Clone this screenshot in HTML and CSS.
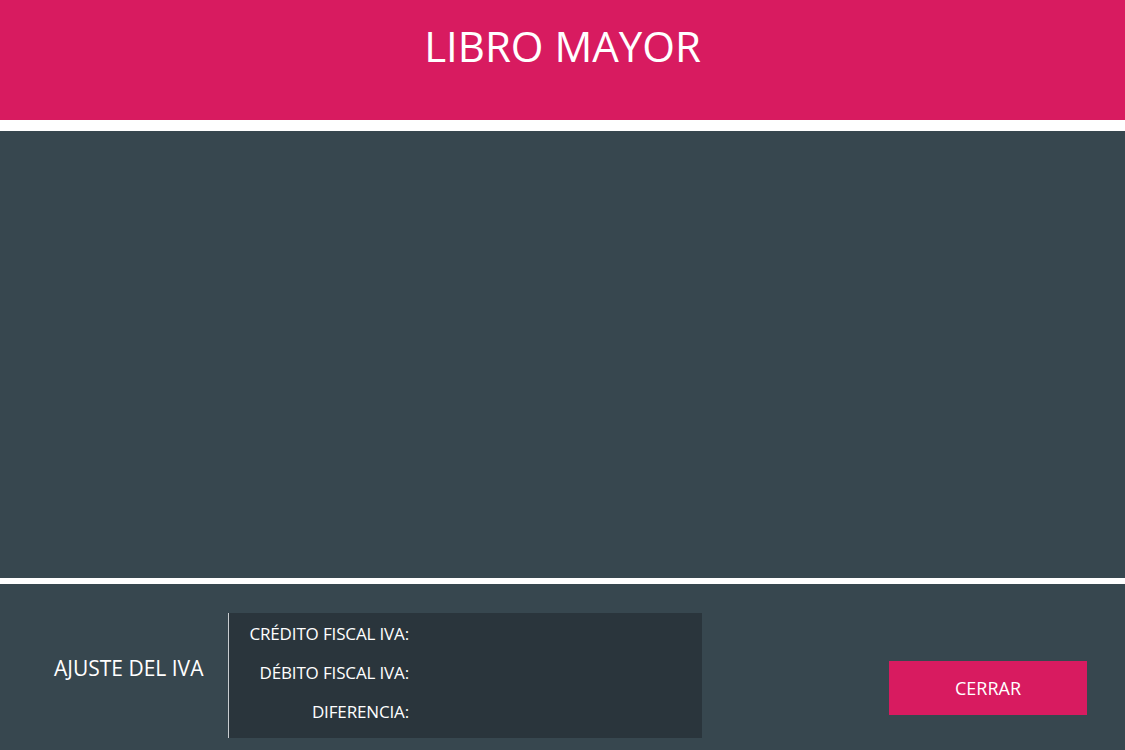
FILE: index.html
```html
<!DOCTYPE html>
<html lang="es">
<head>
<meta charset="utf-8">
<title>Libro Mayor</title>
<link rel="stylesheet" href="styles.css">
</head>
<body>
<div class="page">
  <header class="header">
    <h1 class="title">LIBRO MAYOR</h1>
  </header>
  <main class="content"></main>
  <footer class="footer">
    <div class="ajuste">AJUSTE DEL IVA</div>
    <div class="panel">
      <div class="row"><span class="label">CRÉDITO FISCAL IVA:</span><span class="value"></span></div>
      <div class="row"><span class="label">DÉBITO FISCAL IVA:</span><span class="value"></span></div>
      <div class="row"><span class="label">DIFERENCIA:</span><span class="value"></span></div>
    </div>
    <div class="spacer"></div>
    <button class="btn-cerrar">CERRAR</button>
  </footer>
</div>
</body>
</html>
```

FILE: styles.css
```css
* { box-sizing: border-box; }
html, body {
  margin: 0;
  padding: 0;
  background: #ffffff;
  font-family: "Open Sans", "Noto Sans", sans-serif;
  color: #ffffff;
}
.page {
  width: 1125px;
  height: 750px;
  display: flex;
  flex-direction: column;
  overflow: hidden;
}
.header {
  height: 120px;
  background: #d81b60;
  display: flex;
  justify-content: center;
  flex-shrink: 0;
}
.title {
  margin: 0;
  padding-top: 17px;
  font-size: 42px;
  font-weight: 400;
  line-height: 58px;
  letter-spacing: 0;
}
.content {
  margin-top: 11px;
  height: 447px;
  background: #37474f;
  flex-shrink: 0;
}
.footer {
  margin-top: 6px;
  flex: 1;
  background: #37474f;
  display: flex;
  align-items: flex-start;
  padding: 29px 38px 0 0;
}
.ajuste {
  width: 228px;
  padding-left: 54px;
  margin-top: 41px;
  font-size: 21px;
  line-height: 28px;
}
.panel {
  width: 474px;
  height: 125px;
  background: #2a353c;
  border-left: 1px solid #c8cdd0;
  display: flex;
  flex-direction: column;
  padding-top: 8px;
}
.row {
  display: flex;
  height: 40px;
}
.label {
  width: 180px;
  text-align: right;
  font-size: 17px;
  line-height: 26px;
  letter-spacing: -0.15px;
}
.spacer { flex: 1; }
.btn-cerrar {
  margin-top: 48px;
  width: 198px;
  height: 54px;
  border: none;
  background: #d81b60;
  color: #ffffff;
  font-family: "Open Sans", "Noto Sans", sans-serif;
  font-size: 18px;
  padding: 0;
}
```
